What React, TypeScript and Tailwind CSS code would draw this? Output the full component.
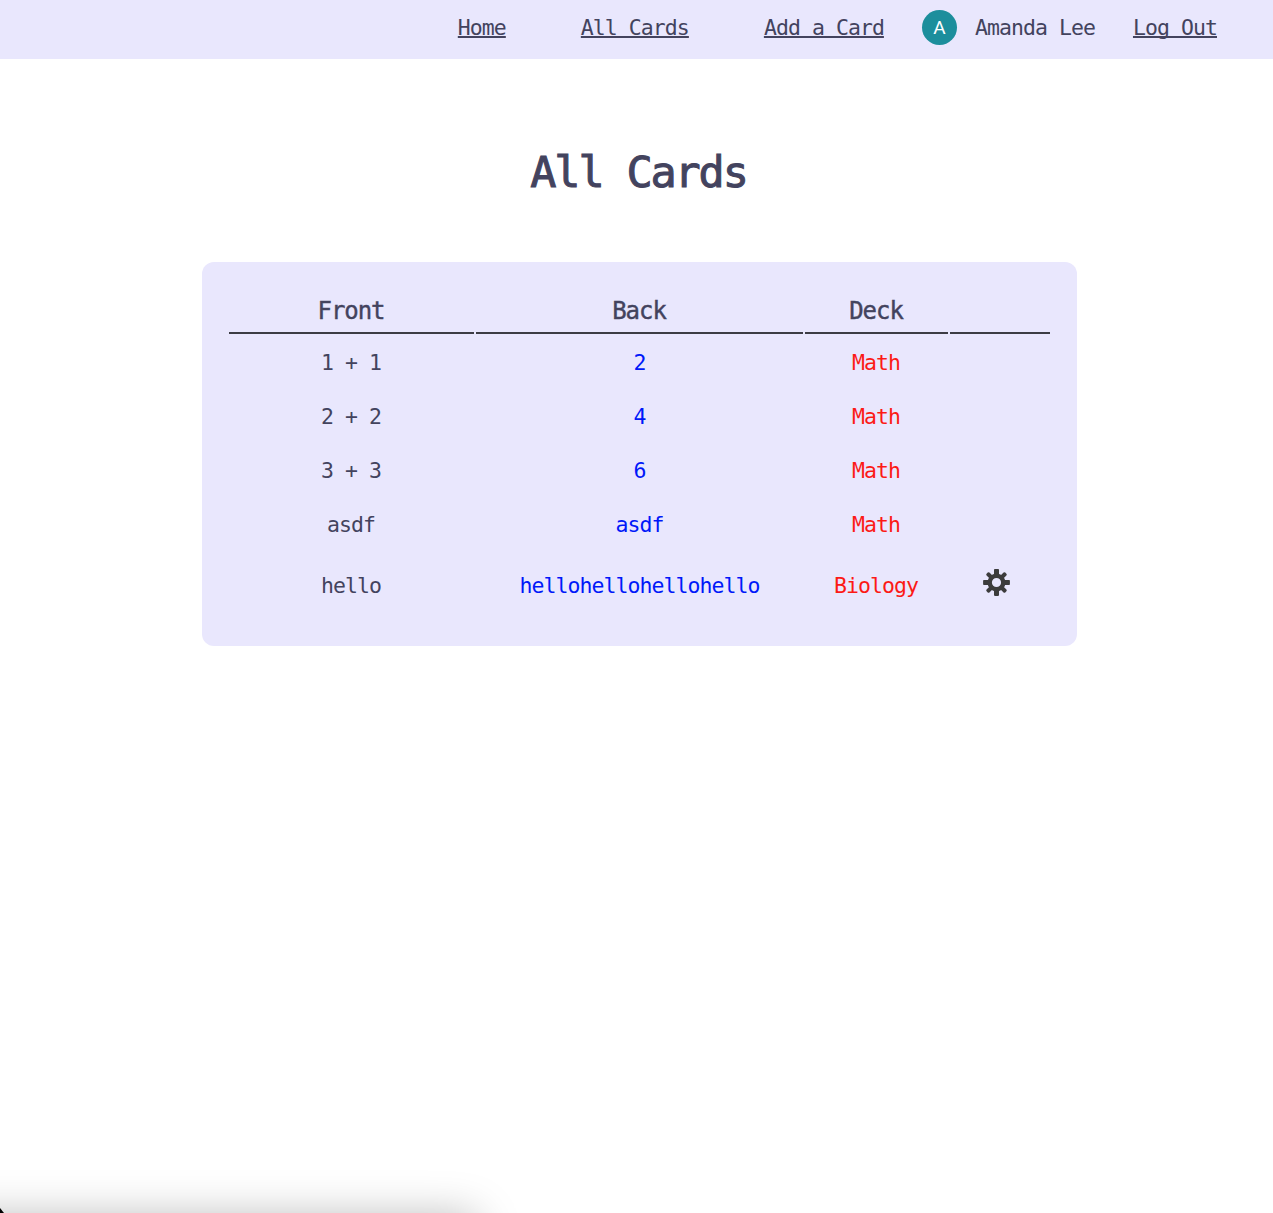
const cards = [
  { front: '1 + 1', back: '2', deck: 'Math' },
  { front: '2 + 2', back: '4', deck: 'Math' },
  { front: '3 + 3', back: '6', deck: 'Math' },
  { front: 'asdf', back: 'asdf', deck: 'Math' },
  { front: 'hello', back: 'hellohellohellohello', deck: 'Biology', editable: true },
];

function GearIcon() {
  return (
    <svg viewBox="-13.5 -13.5 27 27" className="size-[27px]" fill="#3c3c3c">
      {[0, 90, 180, 270].map((angle) => (
        <rect key={angle} x="-2.5" y="-13.4" width="5" height="7" rx="0.8" transform={`rotate(${angle})`} />
      ))}
      {[45, 135, 225, 315].map((angle) => (
        <rect key={angle} x="-2" y="-13.2" width="4" height="7" rx="1.2" transform={`rotate(${angle})`} />
      ))}
      <circle r="6.8" fill="none" stroke="#3c3c3c" strokeWidth="4.4" />
    </svg>
  );
}

function Nav() {
  const link = 'underline decoration-2 underline-offset-[1px] [text-decoration-skip-ink:none]';
  return (
    <nav className="flex h-[59px] items-center justify-end bg-[#e9e7fd] pr-[56px] pb-[4px]">
      <a href="#" className={link}>Home</a>
      <a href="#" className={`${link} ml-[75px]`}>All Cards</a>
      <a href="#" className={`${link} ml-[75px]`}>Add a Card</a>
      <span className="ml-[38px] flex size-[35px] items-center justify-center rounded-full bg-[#1c8e9c] pt-px font-[Roboto,sans-serif] text-[19px] tracking-normal text-white">
        A
      </span>
      <span className="ml-[18px]">Amanda Lee</span>
      <a href="#" className={`${link} ml-[38px]`}>Log Out</a>
    </nav>
  );
}

export default function App() {
  return (
    <div className="relative h-[1213px] overflow-hidden bg-white font-['DejaVu_Sans_Mono',monospace] text-[21.5px] leading-7 tracking-[-0.94px] text-[#43435e]">
      <Nav />
      <main className="flex flex-col items-center pl-[6px]">
        <h1 className="mt-[83px] mr-[2px] text-[43.5px] leading-[60px] font-normal tracking-[-2.15px] [-webkit-text-stroke:1px_#43435e]">
          All Cards
        </h1>
        <section className="mt-[60px] h-[384px] w-[875px] rounded-xl bg-[#e9e7fd] p-[25px]">
          <table className="w-[825px] table-fixed border-separate border-spacing-[2px] text-center">
            <colgroup>
              <col className="w-[245px]" />
              <col className="w-[327px]" />
              <col className="w-[143px]" />
              <col className="w-[100px]" />
            </colgroup>
            <thead>
              <tr className="h-[45px] text-[24px] tracking-[-1.05px] [-webkit-text-stroke:0.4px_#43435e]">
                {['Front', 'Back', 'Deck', ''].map((title) => (
                  <th key={title} className="border-b-2 border-[#3c3c44] p-0 pr-px font-normal">{title}</th>
                ))}
              </tr>
            </thead>
            <tbody>
              {cards.map((card) => (
                <tr key={card.front} className={card.editable ? 'h-[67px]' : 'h-[52px]'}>
                  <td className={card.editable ? 'p-0 pr-px' : 'p-0 pt-[2px] pr-px'}>{card.front}</td>
                  <td className={card.editable ? 'p-0 text-[#0018f9]' : 'p-0 pt-[2px] text-[#0018f9]'}>{card.back}</td>
                  <td className={card.editable ? 'p-0 pr-px text-[#fc1a16]' : 'p-0 pt-[2px] pr-px text-[#fc1a16]'}>{card.deck}</td>
                  <td className="p-0 pr-[8px]">
                    {card.editable && (
                      <button aria-label="Card settings" className="mx-auto mb-[6px] block">
                        <GearIcon />
                      </button>
                    )}
                  </td>
                </tr>
              ))}
            </tbody>
          </table>
        </section>
      </main>
      <div className="absolute top-[1222px] -left-20 h-20 w-[550px] shadow-[0_0_44px_6px_rgba(0,0,0,0.27)]" />
      <div className="absolute bottom-0 left-0 h-[5px] w-1 bg-black [clip-path:polygon(0_0,100%_100%,0_100%)]" />
    </div>
  );
}
